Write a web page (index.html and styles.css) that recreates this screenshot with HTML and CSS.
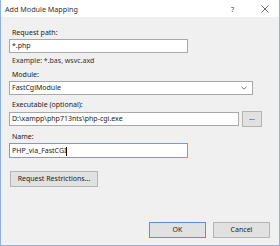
FILE: index.html
```html
<!DOCTYPE html>
<html>
<head>
<meta name="viewport" content="width=device-width, initial-scale=1">
<link rel="stylesheet" href="styles.css">
</head>
<body>
<div class="window">
  <div class="titlebar">
    <span class="title">Add Module Mapping</span>
    <span class="help">?</span>
    <svg class="close" width="8" height="8" viewBox="0 0 8 8"><path d="M0.5 0.5 L7.5 7.5 M7.5 0.5 L0.5 7.5" stroke="#444" stroke-width="0.8" fill="none"/></svg>
  </div>
  <div class="content">
    <div class="label">Request path:</div>
    <div class="field short">*.php</div>
    <div class="hint">Example: *.bas, wsvc.axd</div>

    <div class="label gap">Module:</div>
    <div class="field select">
      <span>FastCgiModule</span>
      <svg width="6" height="4" viewBox="0 0 6 4"><path d="M0.5 0.8 L3 3.2 L5.5 0.8" stroke="#555" stroke-width="0.8" fill="none"/></svg>
    </div>

    <div class="label gap">Executable (optional):</div>
    <div class="row">
      <div class="field exe">D:\xampp\php713nts\php-cgi.exe</div>
      <div class="button browse">...</div>
    </div>

    <div class="label gap">Name:</div>
    <div class="field short focus">PHP_via_FastCGI<span class="caret"></span></div>

    <div class="button restrict">Request Restrictions...</div>
  </div>
  <div class="footer">
    <div class="button ok">OK</div>
    <div class="button cancel">Cancel</div>
  </div>
</div>
</body>
</html>
```

FILE: styles.css
```css
html, body {
  margin: 0;
  padding: 0;
}
body {
  font-family: "Noto Sans", "Open Sans", sans-serif;
  font-size: 7px;
  color: #222;
}
.window {
  width: 280px;
  height: 246px;
  box-sizing: border-box;
  border: 1px solid #8fb2e6;
  border-top: none;
  background: #f0f0f0;
  display: flex;
  flex-direction: column;
}
.titlebar {
  height: 17px;
  background: #fff;
  display: flex;
  align-items: center;
  padding-left: 4px;
  color: #333;
  font-size: 7.2px;
}
.title {
  flex: 1;
}
.help {
  width: 10px;
  margin-right: 20px;
  color: #444;
}
.close {
  margin-right: 10px;
}
.content {
  flex: 1;
  padding: 11px 0 0 8px;
}
.label, .hint {
  line-height: 9px;
  height: 9px;
  padding-left: 3px;
  margin-bottom: 2px;
}
.hint {
  margin-top: 3px;
  color: #333;
}
.gap {
  margin-top: 5px;
}
.field {
  box-sizing: border-box;
  height: 14px;
  line-height: 12px;
  background: #fff;
  border: 1px solid #a8a8a8;
  padding-left: 2px;
  white-space: nowrap;
}
.short {
  width: 179px;
}
.select {
  width: 244px;
  display: flex;
  align-items: center;
  justify-content: space-between;
  padding-right: 5px;
}
.row {
  display: flex;
  align-items: center;
  gap: 3px;
}
.exe {
  width: 230px;
}
.focus {
  height: 15px;
  line-height: 13px;
  border-color: #6c9ee0;
}
.caret {
  display: inline-block;
  width: 1px;
  height: 9px;
  background: #000;
  vertical-align: middle;
}
.button {
  box-sizing: border-box;
  background: #e1e1e1;
  border: 1px solid #b4b4b4;
  text-align: center;
  height: 16px;
  line-height: 14px;
}
.browse {
  width: 20px;
  line-height: 12px;
}
.restrict {
  width: 88px;
  margin: 13px 0 0 1px;
}
.footer {
  display: flex;
  justify-content: flex-end;
  gap: 7px;
  padding: 0 9px 7px 0;
}
.ok, .cancel {
  width: 57px;
}
.ok {
  border-color: #5f8fd4;
}
```
